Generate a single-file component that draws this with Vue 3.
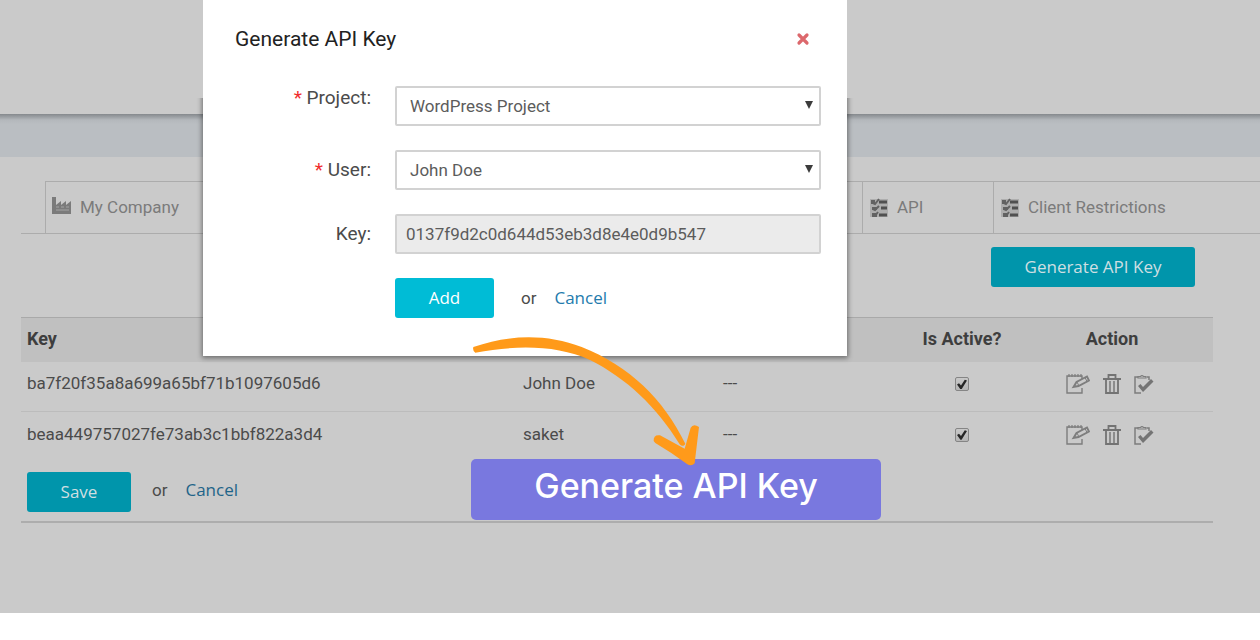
<script setup>
import { ref } from 'vue'

const project = ref('WordPress Project')
const user = ref('John Doe')
const newKey = ref('0137f9d2c0d644d53eb3d8e4e0d9b547')
const keys = ref([
  { key: 'ba7f20f35a8a699a65bf71b1097605d6', user: 'John Doe', note: '---', active: true },
  { key: 'beaa449757027fe73ab3c1bbf822a3d4', user: 'saket', note: '---', active: true },
])
</script>

<template>
  <div class="screen">
    <div class="page">
      <header class="topbar"></header>
      <div class="band"></div>
      <main class="content">
        <nav class="tabs">
          <a href="#" class="tab tab-wide">
            <svg class="tab-icon" viewBox="0 0 20 20" aria-hidden="true">
              <path d="M0 0h4v8l5-4v4l5-4v4l5-4v13H0z" fill="#7b7b7b" />
              <path d="M4 10h3M9 10h3M14 10h3M4 13h13" stroke="#a5a5a5" stroke-width="1" />
            </svg>
            My Company
          </a>
          <a href="#" class="tab tab-api">
            <svg class="tab-icon" viewBox="0 0 20 20" aria-hidden="true">
              <path d="M1 2h18v18H1z" fill="#adadad" />
              <path d="M10 5h8M12 11h6M10 18h8" stroke="#505050" stroke-width="3" />
              <path d="M2 3h4v4H2zM3 10h5v3H3zM3 16h5v4H3z" fill="#626262" />
              <path d="M4 6l2 1 4-5M4 12l2 1 4-4M4 18l2 1 3-4" stroke="#626262" stroke-width="2" fill="none" />
            </svg>
            API
          </a>
          <a href="#" class="tab tab-client">
            <svg class="tab-icon" viewBox="0 0 20 20" aria-hidden="true">
              <path d="M1 2h18v18H1z" fill="#adadad" />
              <path d="M10 5h8M12 11h6M10 18h8" stroke="#505050" stroke-width="3" />
              <path d="M2 3h4v4H2zM3 10h5v3H3zM3 16h5v4H3z" fill="#626262" />
              <path d="M4 6l2 1 4-5M4 12l2 1 4-4M4 18l2 1 3-4" stroke="#626262" stroke-width="2" fill="none" />
            </svg>
            Client Restrictions
          </a>
        </nav>

        <div class="toolbar">
          <button type="button" class="btn btn-dim btn-generate">Generate API Key</button>
        </div>

        <div class="list">
          <table>
            <colgroup>
              <col />
              <col class="col-user" />
              <col class="col-note" />
              <col class="col-active" />
              <col class="col-action" />
            </colgroup>
            <thead>
              <tr>
                <th>Key</th>
                <th></th>
                <th></th>
                <th class="center">Is Active?</th>
                <th class="center">Action</th>
              </tr>
            </thead>
            <tbody>
              <tr v-for="row in keys" :key="row.key">
                <td>{{ row.key }}</td>
                <td>{{ row.user }}</td>
                <td>{{ row.note }}</td>
                <td class="center">
                  <input v-model="row.active" type="checkbox" class="check" :aria-label="'Active: ' + row.key" />
                </td>
                <td>
                  <div class="actions">
                    <button type="button" class="icon-btn" aria-label="Edit">
                      <svg width="24" height="22" viewBox="0 0 24 22" fill="none" stroke="#7d7d7d">
                        <path d="M16 6V3H1v17h15v-5" stroke-width="1.4" />
                        <path d="M3 1v3M6 1v3M9 1v3M12 1v3M15 1v3" stroke-width="1.2" />
                        <path d="M7.500 14l3-5L21 3.500l2 4L12.500 13z" stroke-width="1.900" />
                        <path d="M11 9l2 4M19 4.500l2 4" stroke-width="1" />
                      </svg>
                    </button>
                    <button type="button" class="icon-btn" aria-label="Delete">
                      <svg width="20" height="22" viewBox="0 0 20 22" fill="none" stroke="#737373">
                        <path d="M6.500 5V2h7v3" stroke-width="1.800" />
                        <path d="M1 6h18" stroke-width="2" />
                        <path d="M4 7v13h12V7" stroke-width="1.800" />
                        <path d="M8 8v11M12 8v11" stroke-width="1.400" />
                      </svg>
                    </button>
                    <button type="button" class="icon-btn" aria-label="Approve">
                      <svg width="20" height="22" viewBox="0 0 20 22" fill="none" stroke="#7d7d7d">
                        <path d="M7 20H1V4h3M15 7V4h-2" stroke-width="1.500" />
                        <path d="M4 5V3.500h2.500a1.800 1.800 0 0 1 3 0H12V5z" stroke-width="1.200" />
                        <path d="M4 13l2.500-2 2.500 3 8-8 2.500 2.500L9 19z" fill="#747474" stroke="none" />
                      </svg>
                    </button>
                  </div>
                </td>
              </tr>
            </tbody>
          </table>
          <div class="save-row">
            <button type="button" class="btn btn-dim btn-save">Save</button>
            <span class="or">or</span>
            <a href="#" class="cancel cancel-dim">Cancel</a>
          </div>
        </div>
      </main>
    </div>

    <section class="modal" role="dialog" aria-labelledby="modal-title">
      <div class="modal-head">
        <h2 id="modal-title">Generate API Key</h2>
        <button type="button" class="icon-btn" aria-label="Close">
          <svg width="14" height="14" viewBox="0 0 14 14">
            <path d="M3 3l8 8M11 3l-8 8" stroke="#dc686c" stroke-width="3.200" stroke-linecap="round" />
          </svg>
        </button>
      </div>
      <form class="form" @submit.prevent>
        <label for="project" class="label-top"><span class="req">*</span> Project:</label>
        <div class="select-box">
          <select id="project" v-model="project">
            <option>WordPress Project</option>
          </select>
        </div>
        <label for="user"><span class="req">*</span> User:</label>
        <div class="select-box">
          <select id="user" v-model="user">
            <option>John Doe</option>
            <option>saket</option>
          </select>
        </div>
        <label for="key">Key:</label>
        <input id="key" v-model="newKey" type="text" readonly />
        <div class="form-actions">
          <button type="submit" class="btn btn-add">Add</button>
          <span class="or">or</span>
          <a href="#" class="cancel">Cancel</a>
        </div>
      </form>
    </section>

    <div class="callout">
      <button type="button" class="callout-btn">Generate API Key</button>
      <svg class="arrow" viewBox="0 0 720 400" aria-hidden="true" fill="#ff9a1a">
        <path d="M40 66C150 28 260 26 365 66C510 124 610 222 676 356C672 365 664 364 658 356C590 246 500 160 390 105C290 60 170 60 46 83Q37 77 40 66Z" />
        <path d="M581 348Q580 328 600 331L674 371L692 308Q700 294 717 306L704 415Q694 426 681 417Q632 381 586 354Z" />
      </svg>
    </div>
  </div>
</template>

<style>
body {
  background: #fff;
}
</style>

<style scoped>
* {
  box-sizing: border-box;
}
.screen {
  position: relative;
  font-family: Roboto, "Liberation Sans", sans-serif;
  font-size: 17px;
  line-height: 24px;
  color: #4b4b4b;
}
.page {
  background: #cacaca;
  padding-bottom: 90px;
}
.topbar {
  height: 114px;
}
.band {
  height: 43px;
  background: linear-gradient(#85898d 0, #9ca0a4 3px, #b4b8bc 6px, #babec2 10px);
}
.tabs {
  display: flex;
  margin: 24px 0 0 21px;
  padding-left: 24px;
  border-bottom: 1px solid #acacac;
}
.tab {
  display: flex;
  align-items: center;
  gap: 8px;
  height: 52px;
  padding: 0 0 2px 6px;
  border-left: 1px solid #acacac;
  border-top: 1px solid #acacac;
  color: #7b7b7b;
  text-decoration: none;
}
.tab-wide {
  flex: 1;
}
.tab-api {
  width: 131px;
}
.tab-client {
  width: 267px;
}
.tab-icon {
  width: 20px;
  height: 20px;
}
.toolbar {
  display: flex;
  justify-content: flex-end;
  padding: 13px 65px 0 0;
}
.btn {
  height: 40px;
  border: 0;
  border-radius: 3px;
  padding: 0 0 1px;
  font-family: "Open Sans", "Noto Sans", sans-serif;
  font-size: 17px;
  color: #fff;
  background: #00bcd6;
}
.btn-dim {
  background: #0095ab;
  color: #cfdfe2;
}
.btn-generate {
  width: 204px;
}
.btn-save {
  width: 104px;
}
.btn-add {
  width: 99px;
}
.list {
  margin: 30px 47px 0 21px;
  border-bottom: 2px solid #adadad;
}
table {
  width: 100%;
  table-layout: fixed;
  border-collapse: collapse;
}
.col-user {
  width: 200px;
}
.col-note {
  width: 196px;
}
.col-active {
  width: 98px;
}
.col-action {
  width: 202px;
}
th,
td {
  padding: 0 6px;
  text-align: left;
}
th {
  height: 44px;
  padding-bottom: 2px;
  border-top: 1px solid #a9a9a9;
  background: #c0c0c0;
  font-size: 18px;
  font-weight: 700;
  color: #3e3e3e;
}
td {
  height: 50px;
  padding-bottom: 6px;
}
tbody tr + tr td {
  border-top: 1px solid #bcbcbc;
}
th.center,
td.center {
  text-align: center;
  white-space: nowrap;
  padding-left: 0;
  padding-right: 0;
}
td.center {
  padding-bottom: 4px;
}
.check {
  appearance: none;
  display: block;
  position: relative;
  width: 14px;
  height: 14px;
  margin: 0 auto;
  border: 1px solid #858585;
  border-radius: 2px;
  background: linear-gradient(#c8c8c8, #b5b5b5);
}
.check:checked::after {
  content: "";
  position: absolute;
  inset: 1px;
  background: #262626;
  clip-path: polygon(0 52%, 20% 40%, 40% 62%, 78% 4%, 100% 12%, 46% 100%, 34% 100%);
}
.actions {
  display: flex;
  justify-content: center;
  align-items: center;
  gap: 12px;
  padding: 2px 5px 0 0;
}
.icon-btn {
  display: flex;
  padding: 0;
  border: 0;
  background: none;
}
.save-row,
.form-actions {
  display: flex;
  align-items: center;
}
.save-row {
  padding: 10px 6px 9px;
}
.or {
  margin: 0 18px 0 21px;
  padding-bottom: 4px;
}
.form-actions .or {
  margin-left: 27px;
}
.form-actions .or,
.form-actions .cancel {
  padding-bottom: 1px;
}
.cancel {
  padding-bottom: 4px;
  font-family: "Open Sans", "Noto Sans", sans-serif;
  color: #237bad;
  text-decoration: none;
}
.cancel-dim {
  color: #1f6489;
}
.modal {
  position: absolute;
  top: 0;
  left: 203px;
  width: 644px;
  padding: 26px 26px 38px 32px;
  background: #fff;
  isolation: isolate;
}
.modal::before {
  content: "";
  position: absolute;
  inset: 0;
  z-index: -1;
  box-shadow: 0 1px 5px 1px rgba(0, 0, 0, 0.45);
  clip-path: inset(98px -12px -12px -12px);
}
.modal-head {
  display: flex;
  align-items: center;
  justify-content: space-between;
  padding-right: 11px;
}
h2 {
  margin: 0;
  font-size: 21px;
  line-height: 26px;
  font-weight: 400;
  color: #222;
}
.form {
  display: grid;
  grid-template-columns: 136px 1fr;
  column-gap: 24px;
  row-gap: 24px;
  align-items: center;
  margin-top: 34px;
}
.form label {
  text-align: right;
  font-size: 19px;
}
.form .label-top {
  align-self: start;
}
.req {
  color: #f02d2d;
}
.select-box {
  position: relative;
}
.select-box::after {
  content: "";
  position: absolute;
  top: 15px;
  right: 8px;
  width: 8px;
  height: 8px;
  background: #3c3c3c;
  clip-path: polygon(0 0, 100% 0, 50% 100%);
  pointer-events: none;
}
select,
.form input {
  display: block;
  width: 100%;
  height: 40px;
  border: 2px solid #d2d2d2;
  border-radius: 2px;
  font: inherit;
  color: #5c5c5c;
  background: #fff;
}
select {
  appearance: none;
  padding: 0 24px 0 13px;
}
.form input {
  padding: 0 9px 1px;
  background: #ebebeb;
}
.form-actions {
  grid-column: 2;
}
.callout {
  position: absolute;
  top: 459px;
  left: 471px;
}
.callout-btn {
  width: 410px;
  height: 61px;
  padding: 0 0 8px;
  border: 0;
  border-radius: 5px;
  background: #7978df;
  color: #fff;
  font-family: Inter, "Open Sans", sans-serif;
  font-size: 34px;
  font-weight: 500;
}
.arrow {
  position: absolute;
  left: -11px;
  top: -134px;
  width: 240px;
  overflow: visible;
  pointer-events: none;
}
</style>
